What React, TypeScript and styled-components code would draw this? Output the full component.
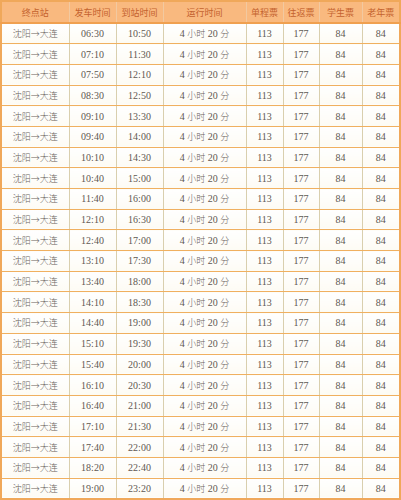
import React from 'react';
import styled, { createGlobalStyle } from 'styled-components';

const GlobalStyle = createGlobalStyle`
	html, body {
		margin: 0;
		padding: 0;
		background: #ffffff;
	}
`;

const Table = styled.table`
	border-collapse: collapse;
	table-layout: fixed;
	width: 399px;
	font-family: 'Liberation Serif', 'Noto Sans CJK SC', serif;
	font-size: 10px;
	color: #5e5852;
	border: 2px solid #f0a85a;
`;

const HeadCell = styled.th`
	height: 20px;
	padding: 0;
	background: #f9b97f;
	color: #c4622e;
	font-weight: normal;
	font-size: 9px;
	font-family: 'Noto Sans CJK SC', sans-serif;
	text-align: center;
	border-left: 1px solid #f2c9a0;
	border-bottom: 2px solid #f0a050;
`;

const Row = styled.tr`
	height: 20.7px;
`;

const Cell = styled.td`
	padding: 0;
	text-align: center;
	background: linear-gradient(to bottom, #ffffff 0%, #fdfbf4 100%);
	border-left: 1px solid #d9cfae;
	border-bottom: 1px solid #f0b060;
	white-space: nowrap;
`;

const Han = styled.span`
	font-family: 'Noto Sans CJK SC', sans-serif;
	font-size: 9px;
	font-weight: 300;
	color: #6a625c;
`;

const columns = [68, 47, 47, 83, 37, 36, 43, 38];
const headers = ['终点站', '发车时间', '到站时间', '运行时间', '单程票', '往返票', '学生票', '老年票'];

const departures = [
	'06:30', '07:10', '07:50', '08:30', '09:10', '09:40', '10:10', '10:40',
	'11:40', '12:10', '12:40', '13:10', '13:40', '14:10', '14:40', '15:10',
	'15:40', '16:10', '16:40', '17:10', '17:40', '18:20', '19:00',
];
const arrivals = [
	'10:50', '11:30', '12:10', '12:50', '13:30', '14:00', '14:30', '15:00',
	'16:00', '16:30', '17:00', '17:30', '18:00', '18:30', '19:00', '19:30',
	'20:00', '20:30', '21:00', '21:30', '22:00', '22:40', '23:20',
];

export default function App() {
	return (
		<>
			<GlobalStyle />
			<Table>
				<colgroup>
					{columns.map((w, i) => (
						<col key={i} style={{ width: `${w}px` }} />
					))}
				</colgroup>
				<thead>
					<tr>
						{headers.map((h) => (
							<HeadCell key={h}>{h}</HeadCell>
						))}
					</tr>
				</thead>
				<tbody>
					{departures.map((dep, i) => (
						<Row key={dep}>
							<Cell>
								<Han>沈阳→大连</Han>
							</Cell>
							<Cell>{dep}</Cell>
							<Cell>{arrivals[i]}</Cell>
							<Cell>
								4 <Han>小时</Han> 20 <Han>分</Han>
							</Cell>
							<Cell>113</Cell>
							<Cell>177</Cell>
							<Cell>84</Cell>
							<Cell>84</Cell>
						</Row>
					))}
				</tbody>
			</Table>
		</>
	);
}
